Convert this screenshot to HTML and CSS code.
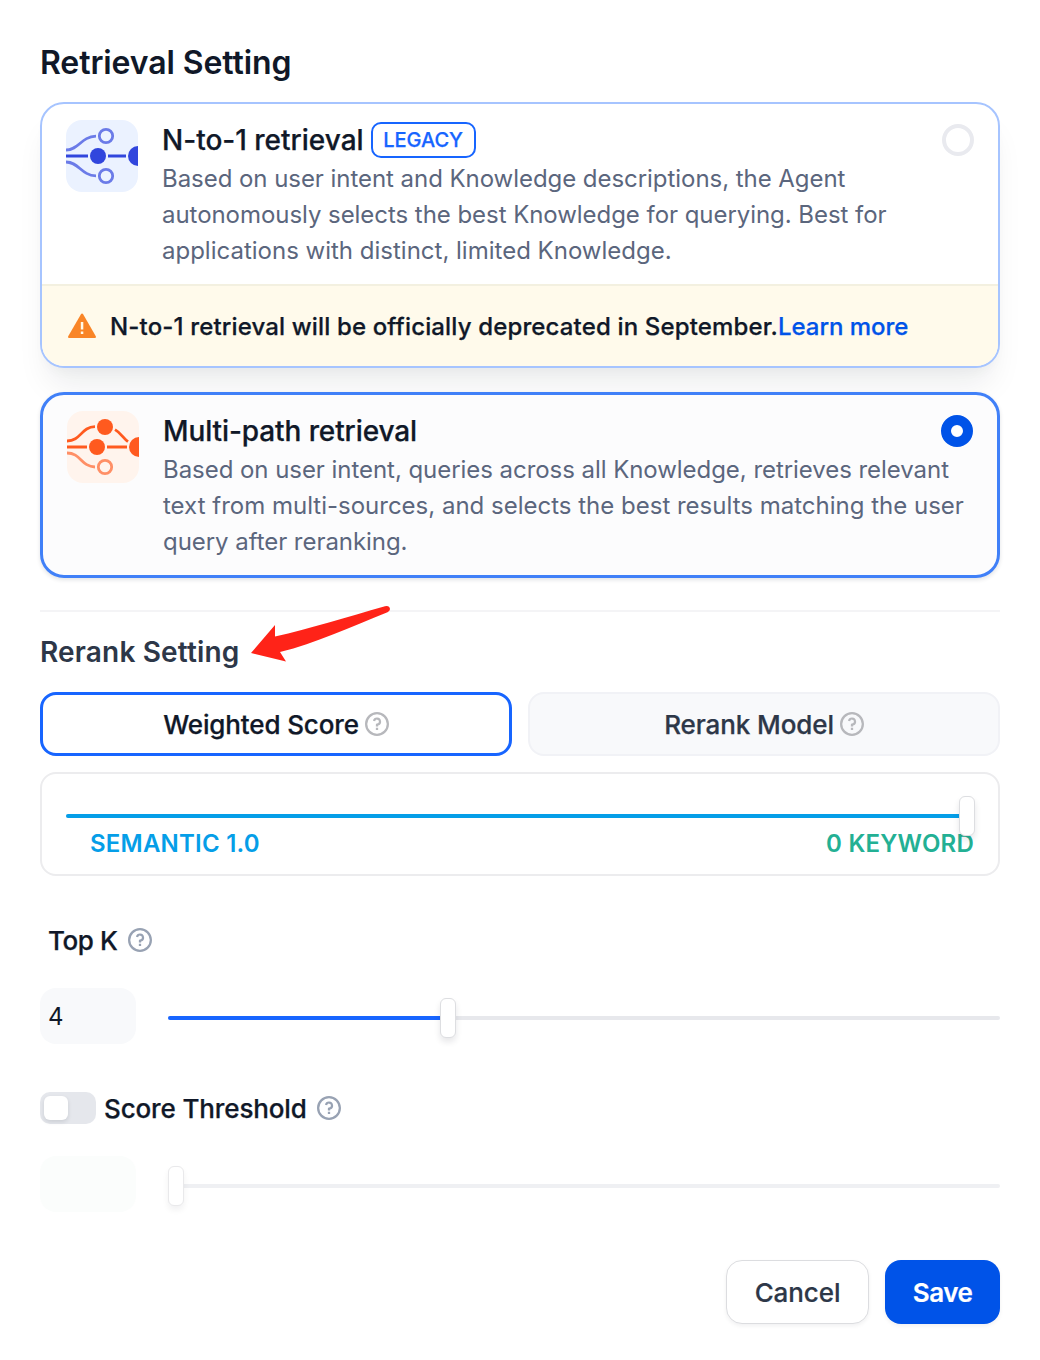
FILE: index.html
```html
<!DOCTYPE html>
<html lang="en">
<head>
<meta charset="utf-8">
<title>Retrieval Setting</title>
<link rel="stylesheet" href="styles.css">
</head>
<body>
<svg class="sprite" width="0" height="0" aria-hidden="true">
  <symbol id="help" viewBox="2 2 20 20">
    <path fill="currentColor" d="M12 22C6.477 22 2 17.523 2 12S6.477 2 12 2s10 4.477 10 10-4.477 10-10 10zm0-1.900a8.100 8.100 0 1 0 0-16.200 8.100 8.100 0 0 0 0 16.200zm-.95-4.900h1.900v1.800h-1.900v-1.800zm1.900-1.850V14h-1.900v-1.500a.95.95 0 0 1 .95-.95 1.600 1.600 0 1 0-1.570-1.900l-1.800-.36A3.450 3.450 0 1 1 12.950 13.350z"/>
  </symbol>
</svg>
<main class="dialog">
  <h1 class="title">Retrieval Setting</h1>

  <section class="card card-legacy">
    <div class="card-body">
      <svg class="card-icon" viewBox="0 0 36 36" fill="none">
        <rect width="36" height="36" fill="#ebf2ff"/>
        <g stroke="#6b7be8" stroke-width="1.4">
          <path d="M0 15c6.500 0 7.500-6.700 15-6.900"/>
          <path d="M0 21c6.500 0 7.500 6.700 15 6.900"/>
          <circle cx="20" cy="8" r="3.350"/>
          <circle cx="20" cy="28" r="3.350"/>
        </g>
        <path d="M0 18h11M21 18h9" stroke="#3146dd" stroke-width="1.400"/>
        <circle cx="16" cy="18" r="4" fill="#3146dd"/>
        <circle cx="36" cy="18" r="5" fill="#3146dd"/>
      </svg>
      <div class="card-text">
        <h2 class="card-title">N-to-1 retrieval<span class="badge">LEGACY</span></h2>
        <p class="desc"><span class="l1">Based on user intent and Knowledge descriptions, the Agent</span><br><span class="l1">autonomously selects the best Knowledge for querying. Best for</span><br>applications with distinct, limited Knowledge.</p>
      </div>
      <span class="radio"></span>
    </div>
    <div class="warning">
      <svg class="warning-icon" viewBox="0 0 32 32">
        <path fill="#f98527" d="M15.100 4a1.100 1.100 0 0 1 1.900 0l12.800 22.300a1.150 1.150 0 0 1-1 1.700H3.200a1.150 1.150 0 0 1-1-1.700z"/>
        <path fill="#fffaeb" d="M14.800 12h2.500v7.500h-2.500zM14.800 21.500h2.500V24h-2.500z"/>
      </svg>
      <p><span class="notice">N-to-1 retrieval will be officially deprecated in September.</span><a class="link">Learn more</a></p>
    </div>
  </section>

  <section class="card card-selected">
    <div class="card-body">
      <svg class="card-icon" viewBox="0 0 36 36" fill="none">
        <rect width="36" height="36" fill="#fff4ed"/>
        <g stroke="#ff5a1f" stroke-width="1.400">
          <path d="M0 15c7 0 7-7 14-7.200M24 9.300c3 1.700 4 4.200 6.500 6M0 18h10M20 18h10"/>
        </g>
        <path d="M0 21c7 0 7 6.800 14 7" stroke="#ff8f66" stroke-width="1.400"/>
        <circle cx="19" cy="28" r="3.350" stroke="#ff8f66" stroke-width="1.400"/>
        <circle cx="19" cy="8" r="4" fill="#ff5a1f"/>
        <circle cx="15" cy="18" r="4" fill="#ff5a1f"/>
        <circle cx="36" cy="18" r="5" fill="#ff5a1f"/>
      </svg>
      <div class="card-text">
        <h2 class="card-title multi">Multi-path retrieval</h2>
        <p class="desc"><span class="l1">Based on user intent, queries across all Knowledge, retrieves relevant</span><br>text from multi-sources, and selects the best results matching the user<br><span class="l1">query after reranking.</span></p>
      </div>
      <span class="radio radio-on"></span>
    </div>
  </section>

  <section class="rerank">
    <h2 class="subtitle">Rerank Setting</h2>
    <svg class="arrow" viewBox="0 0 142 60"><path fill="#ff2318" d="M1 49 25 21V32.500C60 24.500 97 13 135 2.200Q139.500 1.200 140 5Q140 7 137.500 8.200C99 23.500 66 39 30 48L36 57.500Z"/></svg>
    <div class="tabs">
      <div class="tab tab-on"><span class="weighted">Weighted Score</span><svg class="help"><use href="#help"/></svg></div>
      <div class="tab"><span class="model">Rerank Model</span><svg class="help"><use href="#help"/></svg></div>
    </div>
    <div class="weights">
      <div class="slider weight-slider"><div class="fill" style="width:100%"></div><span class="thumb" style="left:893px"></span></div>
      <div class="weight-labels"><span>SEMANTIC 1.0</span><span class="keyword">0 KEYWORD</span></div>
    </div>
  </section>

  <section class="param">
    <div class="param-head top-k"><span class="k">Top K</span><svg class="help"><use href="#help"/></svg></div>
    <div class="param-row">
      <div class="number">4</div>
      <div class="slider"><div class="fill" style="width:280px"></div><span class="thumb" style="left:272px"></span></div>
    </div>
  </section>

  <section class="param">
    <div class="param-head"><span class="toggle"></span><span class="score">Score Threshold</span><svg class="help"><use href="#help"/></svg></div>
    <div class="param-row disabled">
      <div class="number"></div>
      <div class="slider"><span class="thumb" style="left:0"></span></div>
    </div>
  </section>

  <footer class="actions">
    <button class="btn">Cancel</button>
    <button class="btn btn-primary">Save</button>
  </footer>
</main>
</body>
</html>
```

FILE: styles.css
```css
* { box-sizing: border-box; }
body { margin: 0; background: #fff; font-family: Inter, "Liberation Sans", sans-serif; color: #101828; }
h1, h2, p { margin: 0; }
.sprite { display: block; height: 0; }
.dialog { width: 1040px; height: 1360px; padding: 39px 40px 0; display: flex; flex-direction: column; }
.title { font-size: 32px; line-height: 48px; font-weight: 600; letter-spacing: -.1px; margin-bottom: 15px; }

.card { border-radius: 24px; overflow: hidden; flex: none; }
.card-legacy { border: 2px solid #a6c4ff; background: #fff; box-shadow: 0 24px 32px -8px rgba(16,24,40,.08), 0 8px 12px -4px rgba(16,24,40,.03); }
.card-selected { position: relative; border: 3px solid #4080f8; background: #fcfcfd; margin-top: 24px; box-shadow: 0 2px 4px rgba(16,24,40,.12); }
.card-body { display: flex; height: 180px; padding: 16px 24px; }
.card-icon { width: 72px; height: 72px; border-radius: 16px; margin-right: 24px; flex: none; }
.card-text { flex: 1; min-width: 0; white-space: nowrap; }
.card-title { display: flex; align-items: center; gap: 7px; height: 40px; font-size: 28px; line-height: 40px; font-weight: 500; }
.card-title, .warning, .tab, .param-head { -webkit-text-stroke: .25px currentColor; }
.multi { letter-spacing: -.1px; }
.badge { height: 36px; width: 105px; border: 2px solid #1765ff; border-radius: 10px; color: #1765ff; font-size: 20px; line-height: 33px; text-align: center; }
.desc { margin-top: 1px; font-size: 24px; line-height: 36px; color: #5b667d; }
.l1 { letter-spacing: -.05px; }
.radio { width: 32px; height: 32px; margin-top: 4px; border-radius: 50%; border: 4px solid #e9eaef; flex: none; }
.radio-on { border: 10px solid #0053e8; background: #fff; }
.warning { display: flex; align-items: center; gap: 12px; height: 82px; padding: 0 24px; border-top: 2px solid #f3f0e0; background: #fffaeb; font-size: 24px; line-height: 36px; font-weight: 500; white-space: nowrap; }
.warning p { padding-top: 2px; }
.warning-icon { width: 32px; height: 32px; }
.notice { letter-spacing: .148px; }
.link { color: #0053e8; letter-spacing: -.05px; }

.rerank { position: relative; margin-top: 32px; border-top: 2px solid #f4f4f6; padding-top: 20px; }
.subtitle { font-size: 28px; line-height: 40px; font-weight: 600; letter-spacing: .17px; color: #2d3748; }
.arrow { position: absolute; left: 210px; top: -8px; width: 142px; height: 60px; }
.tabs { display: grid; grid-template-columns: 1fr 1fr; gap: 16px; margin-top: 20px; }
.tab { display: flex; align-items: center; justify-content: center; gap: 6px; height: 64px; border: 2px solid #f1f2f6; border-radius: 16px; background: #f8f9fb; color: #2d3748; font-size: 26px; font-weight: 500; }
.tab-on { border: 3px solid #1765ff; background: #fff; color: #101828; }
.weighted { letter-spacing: -.13px; }
.model { letter-spacing: -.1px; }
.help { width: 24px; height: 24px; flex: none; color: #b7b8bc; -webkit-text-stroke: 0; }
.weights { height: 104px; margin-top: 16px; border: 2px solid #ececee; border-radius: 16px; padding: 22px 24px 0; }
.slider { position: relative; flex: 1; height: 40px; display: flex; align-items: center; }
.slider::before { content: ""; position: absolute; left: 0; right: 0; top: 18px; height: 4px; border-radius: 2px; background: #e7e8ec; }
.fill { position: relative; height: 4px; border-radius: 2px; background: #1765ff; }
.thumb { position: absolute; z-index: 2; top: 0; width: 16px; height: 40px; border: 1px solid #dddee1; border-radius: 6px; background: #fff; box-shadow: 0 4px 6px rgba(16,24,40,.1); }
.weight-slider { margin-right: 8px; }
.weight-slider .fill { background: #059ee8; }
.weight-labels { display: flex; justify-content: space-between; margin-top: -11px; padding-left: 24px; font-size: 24px; line-height: 37px; font-weight: 600; letter-spacing: .22px; color: #059ee8; }
.keyword { color: #23b094; }

.param-head { display: flex; align-items: center; gap: 8px; height: 40px; font-size: 26px; font-weight: 500; }
.param-head .help { color: #98a2b3; margin-left: 2px; }
.param { margin-top: 44px; }
.top-k { padding-left: 8px; }
.k { letter-spacing: -.4px; }
.score { letter-spacing: -.13px; }
.param-row { display: flex; align-items: center; gap: 32px; height: 56px; margin-top: 28px; }
.number { width: 96px; height: 56px; border-radius: 16px; background: #f8f9fb; padding-left: 8px; font-size: 24px; line-height: 58px; }
.param-row .slider { margin-top: 4px; }
.toggle { width: 56px; height: 32px; border-radius: 10px; background: #e5e7ec; padding: 4px; }
.toggle::before { content: ""; display: block; width: 24px; height: 24px; border-radius: 6px; background: #fff; box-shadow: 0 2px 4px rgba(16,24,40,.12); }
.disabled .number { background: #fbfdfc; }
.disabled .slider::before { background: #eff0f3; }
.disabled .thumb { border-color: #e9e9eb; box-shadow: 0 4px 6px rgba(16,24,40,.06); }

.actions { display: flex; justify-content: flex-end; gap: 16px; margin-top: 48px; }
.btn { width: 143px; height: 64px; border: 1px solid #dcdde0; border-radius: 16px; background: #fff; color: #2d3748; font: 500 26px/1 Inter, "Liberation Sans", sans-serif; box-shadow: 0 2px 4px rgba(16,24,40,.06); padding: 2px 0 0; letter-spacing: -.1px; -webkit-text-stroke: .2px currentColor; }
.btn-primary { width: 115px; border: 0; background: #0053e8; color: #fff; font-weight: 600; letter-spacing: -.5px; }
```
